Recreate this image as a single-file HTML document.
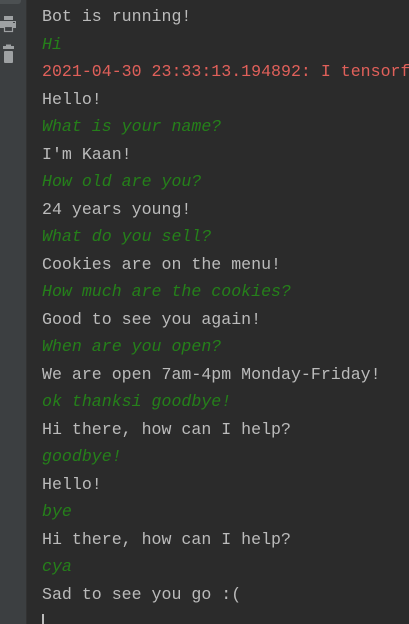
<!DOCTYPE html>
<html><head><style>
html,body{margin:0;padding:0;width:409px;height:624px;overflow:hidden;background:#2b2b2b;position:relative}
#side{position:absolute;left:0;top:0;width:26px;height:624px;background:#3c3f41;border-right:1px solid #323232}
#top{position:absolute;left:0;top:0;width:21px;height:4px;background:#4c5052;border-radius:0 0 3px 0}
#con{position:absolute;left:42px;top:3px;width:367px;height:621px;overflow:hidden;font-family:"Liberation Mono",monospace;font-size:16.6px;line-height:27.5px;color:#bbbbbb;white-space:pre}
.g{color:#25801a;font-style:italic}
.r{color:#e0605a}
.cur{display:inline-block;width:2px;height:16px;background:#bbb;vertical-align:middle}
</style></head><body>
<div id="side"><div id="top"></div>
<svg width="26" height="70" style="position:absolute;left:0;top:0">
<rect x="4" y="16" width="9" height="4" fill="#9ea1a3"/>
<rect x="0" y="21" width="16" height="7" fill="#9ea1a3"/>
<rect x="4.5" y="26.5" width="8" height="5" fill="#3c3f41" stroke="#9ea1a3" stroke-width="1.2"/>
<rect x="13" y="22" width="2" height="1" fill="#3c3f41"/>
<rect x="3" y="46" width="11" height="3" fill="#9ea1a3"/>
<rect x="6" y="44.5" width="5" height="2" fill="#9ea1a3"/>
<rect x="4" y="51" width="9" height="12" rx="1" fill="#9ea1a3"/>
</svg></div>
<div id="con">Bot is running!
<span class="g">Hi</span>
<span class="r">2021-04-30 23:33:13.194892: I tensorflow</span>
Hello!
<span class="g">What is your name?</span>
I'm Kaan!
<span class="g">How old are you?</span>
24 years young!
<span class="g">What do you sell?</span>
Cookies are on the menu!
<span class="g">How much are the cookies?</span>
Good to see you again!
<span class="g">When are you open?</span>
We are open 7am-4pm Monday-Friday!
<span class="g">ok thanksi goodbye!</span>
Hi there, how can I help?
<span class="g">goodbye!</span>
Hello!
<span class="g">bye</span>
Hi there, how can I help?
<span class="g">cya</span>
Sad to see you go :(
<span class="cur"></span></div>
</body></html>
